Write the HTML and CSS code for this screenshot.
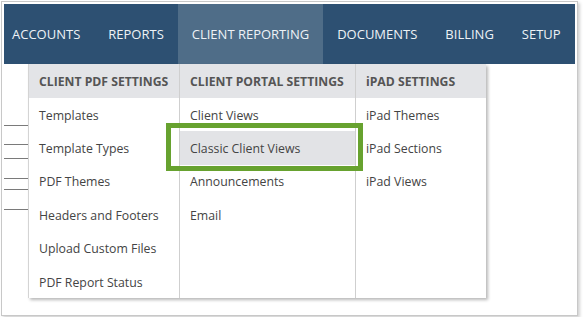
FILE: index.html
```html
<!DOCTYPE html>
<html>
<head>
<meta charset="utf-8">
<link rel="stylesheet" href="styles.css">
</head>
<body>
<div class="frame">
  <nav class="nav">
    <a class="nav-item first">ACCOUNTS</a>
    <a class="nav-item">REPORTS</a>
    <a class="nav-item active">CLIENT REPORTING</a>
    <a class="nav-item">DOCUMENTS</a>
    <a class="nav-item">BILLING</a>
    <a class="nav-item">SETUP</a>
  </nav>
  <div class="underlay">
    <div class="rule r1"></div>
    <div class="rule r2"></div>
    <div class="rule r3"></div>
    <div class="rule r4"></div>
    <div class="rule r5"></div>
    <div class="rule r6"></div>
  </div>
  <div class="menu">
    <div class="col col1">
      <div class="head">CLIENT PDF SETTINGS</div>
      <div class="item">Templates</div>
      <div class="item">Template Types</div>
      <div class="item">PDF Themes</div>
      <div class="item">Headers and Footers</div>
      <div class="item">Upload Custom Files</div>
      <div class="item">PDF Report Status</div>
    </div>
    <div class="col col2">
      <div class="head">CLIENT PORTAL SETTINGS</div>
      <div class="item">Client Views</div>
      <div class="item hover">Classic Client Views</div>
      <div class="item">Announcements</div>
      <div class="item">Email</div>
    </div>
    <div class="col col3">
      <div class="head">iPAD SETTINGS</div>
      <div class="item">iPad Themes</div>
      <div class="item">iPad Sections</div>
      <div class="item">iPad Views</div>
    </div>
  </div>
  <div class="callout"></div>
</div>
</body>
</html>
```
FILE: styles.css
```css
html, body {
  margin: 0;
  padding: 0;
  background: #ffffff;
}
body {
  font-family: "Open Sans", "Noto Sans", sans-serif;
}
.frame {
  position: relative;
  margin: 1px;
  width: 577px;
  height: 315px;
  box-sizing: border-box;
  border: 1px solid #c8c8c8;
  padding: 2px;
  background: #fff;
  box-shadow: 2px 2px 3px rgba(0, 0, 0, 0.18);
}
.nav {
  display: flex;
  height: 60px;
  background: #2d5072;
}
.nav-item {
  display: flex;
  align-items: center;
  padding: 0 14px;
  color: #eef2f6;
  font-size: 13px;
  white-space: nowrap;
}
.nav-item.first {
  padding-left: 8px;
}
.nav-item.active {
  background: #4f6d88;
}
.underlay {
  display: flex;
  flex-direction: column;
  width: 24px;
}
.rule {
  height: 1px;
  background: #7a7a7a;
}
.r1 { margin-top: 61px; }
.r2 { margin-top: 18px; }
.r3 { margin-top: 13px; }
.r4 { margin-top: 19px; }
.r5 { margin-top: 10px; }
.r6 { margin-top: 19px; }
.menu {
  position: absolute;
  left: 26px;
  top: 62px;
  display: flex;
  background: #fff;
  border-left: 1px solid #d4d4d4;
  box-shadow: 2px 2px 3px rgba(0, 0, 0, 0.28);
}
.col {
  display: flex;
  flex-direction: column;
  border-right: 1px solid #cfcfcf;
}
.col1 { width: 150px; }
.col2 { width: 175px; }
.col3 { width: 130px; border-right: none; }
.head {
  height: 34px;
  display: flex;
  align-items: center;
  padding-left: 10px;
  background: #e3e4e7;
  color: #555;
  font-size: 12.2px;
  font-weight: 700;
  white-space: nowrap;
}
.item {
  height: 33.4px;
  display: flex;
  align-items: center;
  padding-left: 10px;
  padding-top: 1px;
  box-sizing: border-box;
  color: #444;
  font-size: 12.3px;
  white-space: nowrap;
}
.item.hover {
  background: #e2e3e6;
}
.callout {
  position: absolute;
  left: 164px;
  top: 121px;
  width: 197px;
  height: 48px;
  box-sizing: border-box;
  border: 5px solid #67a22f;
}
```
